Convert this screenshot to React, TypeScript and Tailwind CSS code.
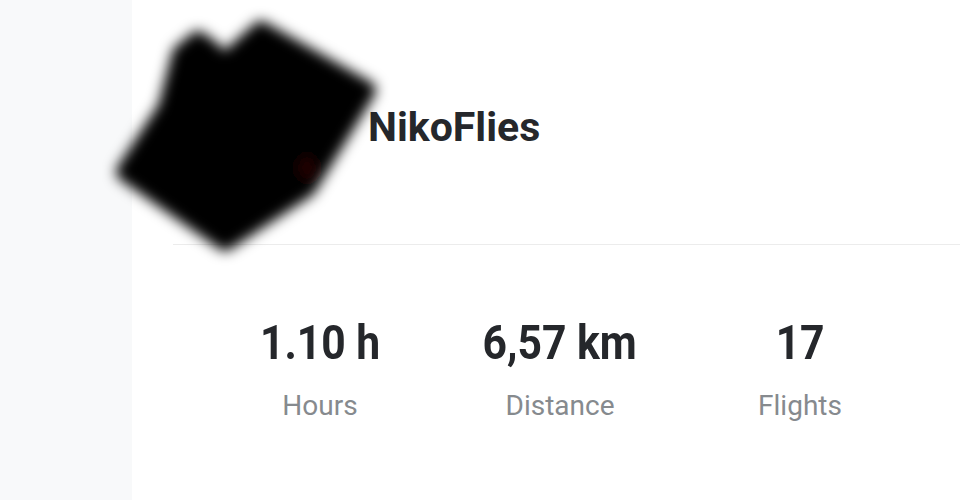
import React from "react";

function Avatar() {
  return (
    <svg
      width="300"
      height="270"
      viewBox="0 0 300 270"
      className="absolute left-[-58px] top-0 overflow-visible"
    >
      <defs>
        <filter id="blr" x="-20%" y="-20%" width="140%" height="140%">
          <feGaussianBlur stdDeviation="6.5" />
        </filter>
      </defs>
      <g filter="url(#blr)">
        <path
          d="M83 40 L97 50 L108 64 L146 30 L252 90 L192 188 L110 242 L10 172 L52 108 L66 54 Z"
          fill="#000"
          stroke="#000"
          strokeWidth="18"
          strokeLinejoin="round"
        />
        <ellipse cx="192" cy="168" rx="6" ry="11" fill="#2a0404" />
      </g>
    </svg>
  );
}

function Stat({ value, label }: { value: string; label: string }) {
  return (
    <div className="flex flex-col items-center">
      <div className="inline-block scale-x-[0.87] text-[49px] font-bold leading-none text-[#25272b]">
        {value}
      </div>
      <div className="mt-[25px] text-[28px] leading-none text-[#868a8e]">{label}</div>
    </div>
  );
}

export default function App() {
  return (
    <div
      className="flex h-[500px] w-[960px] overflow-hidden bg-white"
      style={{ fontFamily: "Roboto, 'Noto Sans', sans-serif" }}
    >
      <div className="h-full w-[132px] shrink-0 bg-[#f8f9fa]" />
      <div className="flex-1 bg-white">
        <div className="ml-[41px] flex h-[245px] items-center border-b border-[#ececec]">
          <div className="relative h-full w-[195px] shrink-0">
            <Avatar />
          </div>
          <div className="mt-[11px] text-[41px] font-bold leading-none text-[#25272b]">NikoFlies</div>
        </div>
        <div className="ml-[68px] mt-[73px] grid grid-cols-[240px_240px_240px]">
          <Stat value="1.10 h" label="Hours" />
          <Stat value="6,57 km" label="Distance" />
          <Stat value="17" label="Flights" />
        </div>
      </div>
    </div>
  );
}
